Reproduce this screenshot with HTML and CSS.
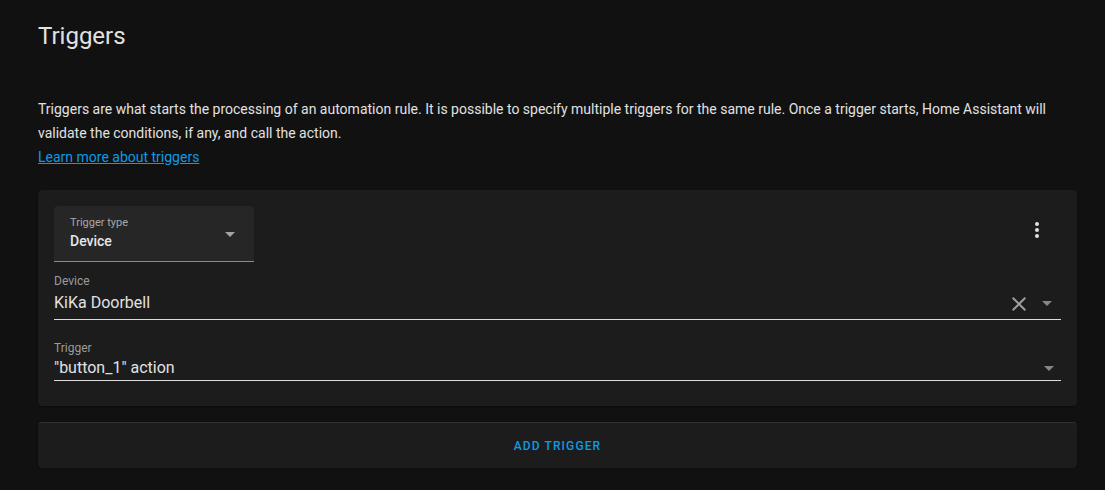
FILE: index.html
```html
<!DOCTYPE html>
<html lang="en">
<head>
<meta charset="utf-8">
<title>Triggers</title>
<link rel="stylesheet" href="styles.css">
</head>
<body>
<div class="page">
  <h2 class="title">Triggers</h2>
  <p class="desc">Triggers are what starts the processing of an automation rule. It is possible to specify multiple triggers for the same rule. Once a trigger starts, Home Assistant will validate the conditions, if any, and call the action.<br><a class="link" href="#">Learn more about triggers</a></p>

  <div class="card">
    <div class="card-head">
      <div class="select">
        <div class="select-text">
          <div class="select-label">Trigger type</div>
          <div class="select-value">Device</div>
        </div>
        <span class="arrow arrow-light"></span>
      </div>
      <div class="icon-btn">
        <svg width="24" height="24" viewBox="0 0 24 24"><path fill="#e1e1e1" d="M12,16A2,2 0 0,1 14,18A2,2 0 0,1 12,20A2,2 0 0,1 10,18A2,2 0 0,1 12,16M12,10A2,2 0 0,1 14,12A2,2 0 0,1 12,14A2,2 0 0,1 10,12A2,2 0 0,1 12,10M12,4A2,2 0 0,1 14,6A2,2 0 0,1 12,8A2,2 0 0,1 10,6A2,2 0 0,1 12,4Z"/></svg>
      </div>
    </div>

    <div class="field field-device">
      <div class="field-label">Device</div>
      <div class="field-row">
        <span class="field-value">KiKa Doorbell</span>
        <svg class="clear" width="24" height="24" viewBox="0 0 24 24"><path fill="#9e9e9e" d="M19,6.41L17.59,5L12,10.59L6.41,5L5,6.41L10.59,12L5,17.59L6.41,19L12,13.41L17.59,19L19,17.59L13.41,12L19,6.41Z"/></svg>
        <span class="arrow arrow-dim arrow-device"></span>
      </div>
    </div>

    <div class="field field-trigger">
      <div class="field-label">Trigger</div>
      <div class="field-row">
        <span class="field-value">"button_1" action</span>
        <span class="arrow arrow-dim arrow-trigger"></span>
      </div>
    </div>
  </div>

  <div class="add-card">
    <span class="add-btn">ADD TRIGGER</span>
  </div>
</div>
</body>
</html>
```

FILE: styles.css
```css
html, body {
  margin: 0;
  padding: 0;
  background: #111111;
}
body {
  font-family: Roboto, "Noto Sans", "Liberation Sans", sans-serif;
  color: #e1e1e1;
}
.page {
  padding: 20px 28px 0 38px;
}
.title {
  margin: 0;
  font-size: 24px;
  line-height: 32px;
  font-weight: 400;
  color: #e1e1e1;
}
.desc {
  margin: 45px 0 0;
  font-size: 14px;
  line-height: 24px;
  color: #e1e1e1;
}
.link {
  color: #0c9be6;
  text-decoration: underline;
}
.card {
  margin-top: 21px;
  background: #1c1c1c;
  border-radius: 4px;
  padding: 16px 16px 25px;
  box-shadow: 0 1px 2px rgba(0,0,0,0.4);
}
.card-head {
  display: flex;
  justify-content: space-between;
  align-items: flex-start;
}
.select {
  width: 200px;
  height: 56px;
  background: #262626;
  border-radius: 4px 4px 0 0;
  border-bottom: 1px solid #8a8a8a;
  display: flex;
  align-items: center;
  padding: 0 19px 0 16px;
  box-sizing: border-box;
}
.select-text {
  flex: 1;
  padding-bottom: 2px;
}
.select-label {
  font-size: 11px;
  line-height: 16px;
  color: #a8a8a8;
}
.select-value {
  font-size: 14px;
  line-height: 20px;
  font-weight: 500;
  color: #e6e6e6;
}
.arrow {
  display: inline-block;
  width: 0;
  height: 0;
  border-left: 5px solid transparent;
  border-right: 5px solid transparent;
  border-top: 5px solid #a0a0a0;
  flex: none;
}
.arrow-light { border-top-color: #a3a3a3; margin-top: 1px; }
.arrow-dim { border-top-color: #858585; }
.icon-btn {
  width: 48px;
  height: 48px;
  display: flex;
  align-items: center;
  justify-content: center;
}
.icon-btn svg { display: block; }
.field {
  border-bottom: 1px solid #dcdcdc;
}
.field-label {
  font-size: 12px;
  line-height: 16px;
  color: #9b9b9b;
}
.field-row {
  display: flex;
  align-items: center;
  height: 24px;
}
.field-value {
  flex: 1;
  font-size: 16px;
  line-height: 24px;
  color: #e1e1e1;
}
.field-device {
  margin-top: 11px;
  padding-bottom: 4px;
}
.field-device .field-row { margin-top: 2px; }
.clear { display: block; margin-right: 11px; margin-top: 1px; }
.arrow-device { margin-right: 9px; margin-top: 1px; }
.field-trigger {
  margin-top: 20px;
  padding-bottom: 0;
}
.field-trigger .field-row { margin-top: 0; }
.arrow-trigger { margin-right: 7px; }
.add-card {
  margin-top: 16px;
  height: 46px;
  box-sizing: border-box;
  background: #1c1c1c;
  border-radius: 4px;
  border-top: 1px solid #323232;
  display: flex;
  align-items: center;
  justify-content: center;
  box-shadow: 0 1px 2px rgba(0,0,0,0.4);
}
.add-btn {
  font-size: 12px;
  font-weight: 500;
  letter-spacing: 1.1px;
  color: #0c9be6;
  line-height: 16px;
}
```
